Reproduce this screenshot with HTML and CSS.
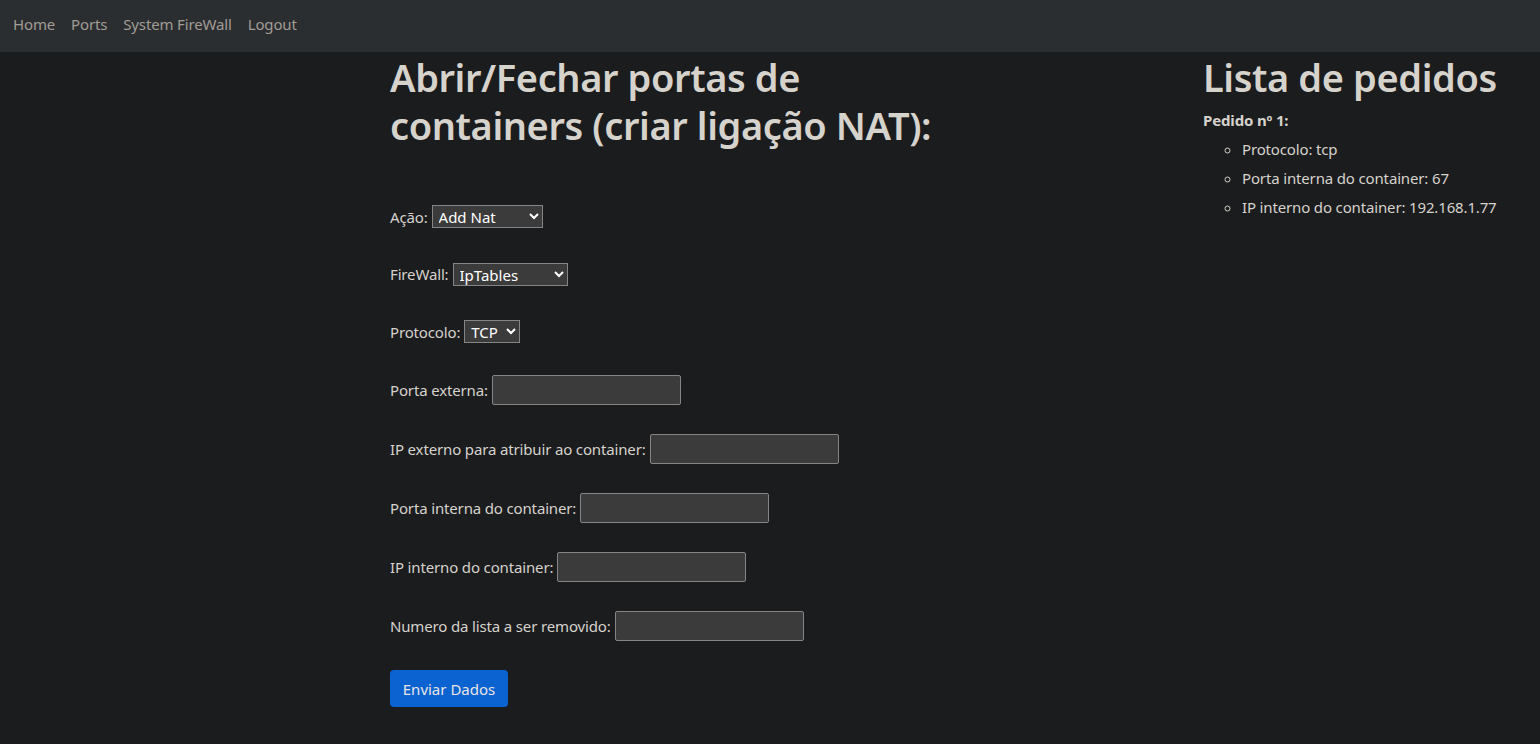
FILE: index.html
```html
<!DOCTYPE html>
<html lang="pt">
<head>
<meta charset="utf-8">
<title>Portas</title>
<link rel="stylesheet" href="styles.css">
</head>
<body>
<nav class="navbar">
  <a class="nav-link" href="#">Home</a>
  <a class="nav-link" href="#">Ports</a>
  <a class="nav-link" href="#">System FireWall</a>
  <a class="nav-link" href="#">Logout</a>
</nav>
<main class="page">
  <section class="col-form">
    <h1 class="title title-form">Abrir/Fechar portas de containers (criar ligação NAT):</h1>
    <form class="nat-form">
      <div class="field sel">
        <label>Ação:</label>
        <select class="select select-acao"><option>Add Nat</option><option>Remove Nat</option></select>
      </div>
      <div class="field sel">
        <label>FireWall:</label>
        <select class="select select-fw"><option>IpTables</option><option>FirewallD</option></select>
      </div>
      <div class="field sel">
        <label>Protocolo:</label>
        <select class="select select-proto"><option>TCP</option><option>UDP</option></select>
      </div>
      <div class="field inp">
        <label>Porta externa:</label>
        <input class="text-input" type="text">
      </div>
      <div class="field inp">
        <label>IP externo para atribuir ao container:</label>
        <input class="text-input" type="text">
      </div>
      <div class="field inp">
        <label>Porta interna do container:</label>
        <input class="text-input" type="text">
      </div>
      <div class="field inp">
        <label>IP interno do container:</label>
        <input class="text-input" type="text">
      </div>
      <div class="field inp">
        <label>Numero da lista a ser removido:</label>
        <input class="text-input" type="text">
      </div>
      <button class="btn-primary" type="button">Enviar Dados</button>
    </form>
  </section>
  <section class="col-list">
    <h1 class="title">Lista de pedidos</h1>
    <p class="pedido">Pedido nº 1:</p>
    <ul class="pedido-list">
      <li>Protocolo: tcp</li>
      <li>Porta interna do container: 67</li>
      <li>IP interno do container: 192.168.1.77</li>
    </ul>
  </section>
</main>
</body>
</html>
```

FILE: styles.css
```css
html, body {
  margin: 0;
  padding: 0;
}
body {
  background: #1b1c1e;
  color: #d6d2cc;
  font-family: "Noto Sans", "Open Sans", sans-serif;
  font-size: 15px;
  letter-spacing: -0.15px;
  line-height: 24px;
  color-scheme: dark;
  height: 744px;
  overflow: hidden;
}
.navbar {
  display: flex;
  align-items: center;
  box-sizing: border-box;
  height: 52px;
  background: #2b2e31;
  padding: 0 0 4px 5px;
}
.nav-link {
  color: #a19c95;
  text-decoration: none;
  padding: 0 8px;
}
.page {
  display: grid;
  grid-template-columns: 813px auto;
  padding-left: 390px;
}
.title {
  font-size: 38px;
  font-weight: 600;
  letter-spacing: -0.4px;
  line-height: 48px;
  margin: 1px 0 0;
  color: #d6d2cc;
}
.title-form {
  max-width: 600px;
}
.nat-form {
  margin-top: 38.75px;
  display: flex;
  flex-direction: column;
  align-items: flex-start;
}
.field {
  display: flex;
  align-items: center;
  gap: 4px;
}
.field.sel { height: 57.5px; }
.field.inp { height: 59px; }
.select {
  font: inherit;
  font-size: 15px;
  height: 23px;
  padding: 0 2px;
  background: #3b3b3b;
  color: #fff;
  border: 1px solid #858585;
  border-radius: 0;
}
.select-acao { width: 111px; }
.select-fw { width: 115px; }
.select-proto { width: 56px; }
.text-input {
  width: 189px;
  height: 30px;
  box-sizing: border-box;
  background: #3b3b3b;
  border: 1px solid #858585;
  border-radius: 2px;
  color: #fff;
  font: inherit;
}
.btn-primary {
  margin-top: 14.75px;
  width: 118px;
  height: 37px;
  background: #0b62d1;
  color: #e8e6e3;
  border: none;
  border-radius: 4px;
  font: inherit;
}
.pedido {
  font-weight: 700;
  margin: 5px 0 0;
  line-height: 29px;
}
.pedido-list {
  list-style: circle;
  margin: 0;
  padding-left: 39px;
  line-height: 29px;
}
```
